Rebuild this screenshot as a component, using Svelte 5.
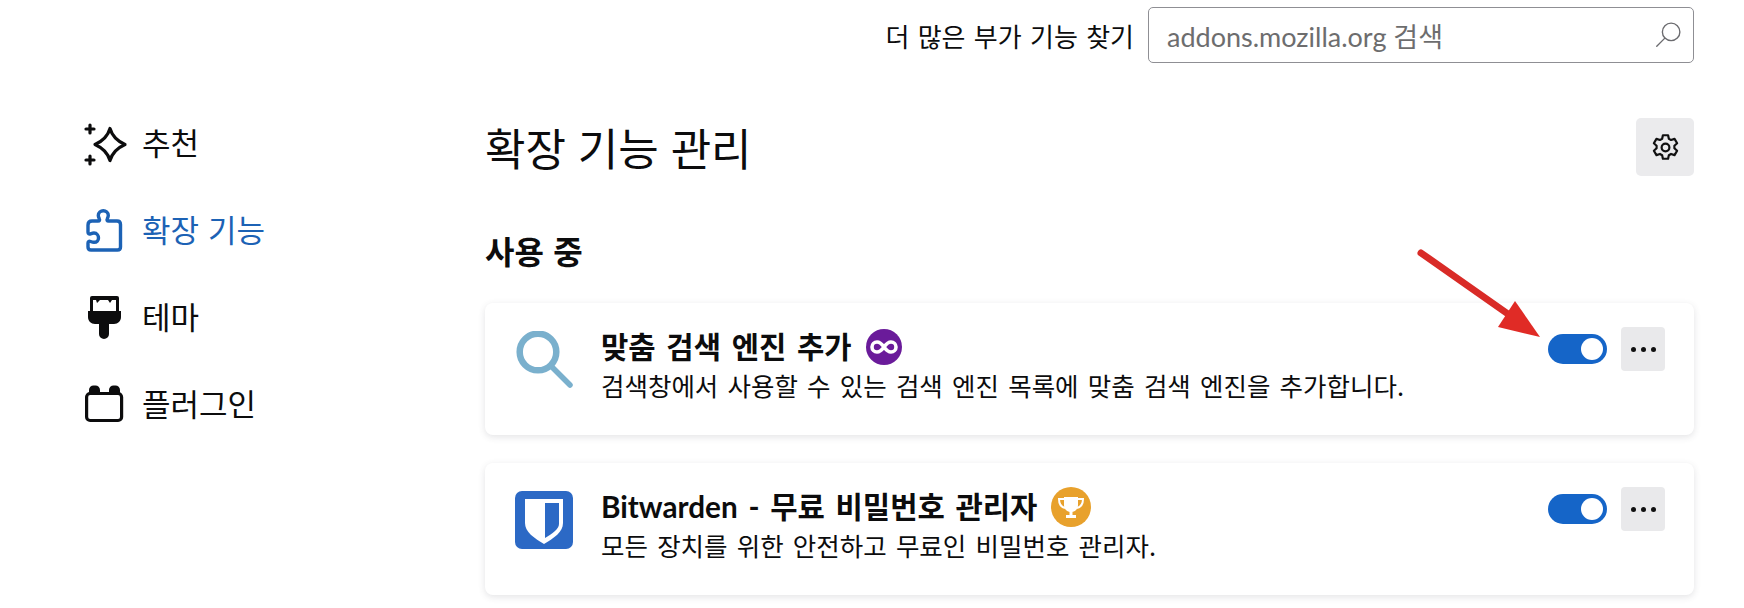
<script>
  const NAV = [
    { label: '추천', icon: 'sparkle' },
    { label: '확장 기능', icon: 'puzzle', active: true },
    { label: '테마', icon: 'brush' },
    { label: '플러그인', icon: 'plugin' }
  ];

  const ADDONS = [
    {
      name: '맞춤 검색 엔진 추가',
      desc: '검색창에서 사용할 수 있는 검색 엔진 목록에 맞춤 검색 엔진을 추가합니다.',
      icon: 'search',
      badge: 'line'
    },
    {
      name: 'Bitwarden - 무료 비밀번호 관리자',
      desc: '모든 장치를 위한 안전하고 무료인 비밀번호 관리자.',
      icon: 'bitwarden',
      badge: 'trophy'
    }
  ];
</script>

<div class="page">
  <header class="topbar">
    <span class="find-label">더 많은 부가 기능 찾기</span>
    <div class="search">
      <span class="placeholder">addons.mozilla.org 검색</span>
      <svg viewBox="0 0 24 24" width="30" height="30" fill="none" stroke="#6b6b6f" stroke-width="1.1">
        <circle cx="14.5" cy="9.5" r="7" />
        <path d="M9.5 14.5 3 21" stroke-linecap="round" />
      </svg>
    </div>
  </header>

  <div class="body">
    <nav class="sidebar">
      {#each NAV as item}
        <div class="nav-item" class:active={item.active}>
          <span class="nav-icon">
            {#if item.icon === 'sparkle'}
              <svg viewBox="0 0 44 44" width="44" height="44">
                <path d="M26 6.500c2 7 6 12 15 16-9 4-13 9-15 16-2-7-6-12-15-16 9-4 13-9 15-16Z" fill="none" stroke="currentColor" stroke-width="3.200" stroke-linejoin="round" />
                <path d="M6 3v8M2 7h8M6 34v8M2 38h8" stroke="currentColor" stroke-width="3.200" stroke-linecap="round" />
              </svg>
            {:else if item.icon === 'puzzle'}
              <svg viewBox="0 0 44 44" width="44" height="44">
                <path d="M8 12H14c1.500 0 2-1 1.300-2.300-.6-1.200-1-2-1-3.200C14.300 3.700 16.800 1.800 19.300 1.800s5 1.900 5 4.700c0 1.200-.4 2-1 3.200-.7 1.300-.2 2.300 1.300 2.300H33c2.300 0 3.500 1.200 3.500 3.500V38c0 2-1 3-3 3H7c-2 0-3-1-3-3v-4c0-1.500 1-2 2.500-1.500 1.400.5 2.500.8 3.500.8 3 0 4.500-2.100 4.500-4.300S13 24 10 24c-1 0-2.100.3-3.500.8C5 25.300 4 24.800 4 23.300V16c0-2.600 1.400-4 4-4Z" fill="none" stroke="currentColor" stroke-width="3.400" stroke-linejoin="round" />
              </svg>
            {:else if item.icon === 'brush'}
              <svg viewBox="0 0 44 44" width="44" height="44">
                <rect x="6" y="0" width="29" height="20" rx="2" fill="currentColor" />
                <path d="M9 4h3l1 3 3-3h8l2 3 2-3h4v12H9Z" fill="#fff" />
                <path d="M4 15h33v6c0 4-3 7-7 7h-5v10a5 5 0 0 1-10 0V28h-4c-4 0-7-3-7-7Z" fill="currentColor" />
              </svg>
            {:else}
              <svg viewBox="0 0 44 44" width="44" height="44">
                <rect x="2.600" y="10.500" width="35" height="27" rx="3.500" fill="none" stroke="currentColor" stroke-width="3.200" />
                <path d="M5 11V7a4.500 4.500 0 0 1 4.500-4.500h2A4.500 4.500 0 0 1 16 7v4ZM25 11V7a4.500 4.500 0 0 1 4.500-4.500h2A4.500 4.500 0 0 1 36 7v4Z" fill="currentColor" />
              </svg>
            {/if}
          </span>
          <span class="nav-label">{item.label}</span>
        </div>
      {/each}
    </nav>

    <main class="content">
      <div class="title-row">
        <h1>확장 기능 관리</h1>
        <button class="gear-btn" aria-label="도구">
          <svg viewBox="0 0 24 24" width="31" height="31" fill="none" stroke="#111" stroke-width="1.700" stroke-linejoin="round">
            <path d="M10 2.500h4l.6 2.800 1.700.9 2.700-.9 2 3.400-2.100 1.900v2l2.100 1.900-2 3.400-2.700-.9-1.700 1-.6 2.700h-4l-.6-2.700-1.700-1-2.700.9-2-3.400 2.100-1.900v-2L3 8.700l2-3.400 2.700.9 1.700-.9Z" />
            <circle cx="12" cy="12" r="3" />
          </svg>
        </button>
      </div>

      <h2>사용 중</h2>

      <div class="cards">
        {#each ADDONS as addon}
          <section class="card">
            <div class="addon-icon">
              {#if addon.icon === 'search'}
                <svg viewBox="0 0 60 60" width="60" height="60">
                  <circle cx="23" cy="21" r="18.300" fill="none" stroke="#7ab0cd" stroke-width="6.500" />
                  <path d="M36 35 55 54" stroke="#7ab0cd" stroke-width="5.500" stroke-linecap="round" />
                </svg>
              {:else}
                <svg viewBox="0 0 60 60" width="60" height="60">
                  <rect width="58" height="58" rx="7" fill="#2c69c5" />
                  <path d="M10 8h38v24c0 9-9 15-19 21-10-6-19-12-19-21Z" fill="#fff" />
                  <path d="M30 12h14v21c0 5-6 9-14 14Z" fill="#2c69c5" />
                </svg>
              {/if}
            </div>
            <div class="addon-text">
              <div class="addon-name">
                <span>{addon.name}</span>
                {#if addon.badge === 'line'}
                  <svg class="badge" viewBox="0 0 36 36" width="36" height="36">
                    <circle cx="18" cy="18" r="18" fill="#6a1b9a" />
                    <path d="M18 18c-2.500-3.500-4.500-5-7-5a5 5 0 0 0 0 10c2.500 0 4.500-1.500 7-5 2.500-3.500 4.500-5 7-5a5 5 0 0 1 0 10c-2.500 0-4.500-1.500-7-5Z" fill="none" stroke="#fff" stroke-width="3.600" />
                  </svg>
                {:else}
                  <svg class="badge" viewBox="0 0 40 40" width="40" height="40">
                    <circle cx="20" cy="20" r="20" fill="#e8a12c" />
                    <path d="M13 10h14v8c0 4-3 7-7 7s-7-3-7-7Z" fill="#fff" />
                    <path d="M13 12H8c0 5 2 8 6 9M27 12h5c0 5-2 8-6 9" fill="none" stroke="#fff" stroke-width="2" />
                    <path d="M18.500 24h3v4h3.500v3H15v-3h3.500Z" fill="#fff" />
                  </svg>
                {/if}
              </div>
              <div class="addon-desc">{addon.desc}</div>
            </div>
            <div class="controls">
              <span class="toggle"><span class="knob"></span></span>
              <button class="more" aria-label="더 보기">
                <i></i><i></i><i></i>
              </button>
            </div>
          </section>
        {/each}
      </div>
    </main>
  </div>

  <!-- annotation drawn over the screenshot -->
  <svg class="arrow" viewBox="0 0 130 100" width="130" height="100">
    <path d="M5 5 92 66" stroke="#d92b27" stroke-width="7" stroke-linecap="round" />
    <path d="M99 53 124 89 82 79Z" fill="#e02b26" />
  </svg>
</div>

<style>
  :global(body) {
    background: #fff;
    font-family: "Noto Sans CJK KR", "Noto Sans", sans-serif;
    color: #0c0c0d;
    overflow: hidden;
  }

  .page {
    position: relative;
    height: 608px;
    padding: 7px 50px 0 84px;
    box-sizing: border-box;
  }

  .topbar {
    display: flex;
    justify-content: flex-end;
    align-items: center;
    gap: 14px;
    height: 56px;
  }

  .find-label { font-size: 26px; word-spacing: 2.5px; }

  .search {
    width: 546px;
    height: 56px;
    box-sizing: border-box;
    border: 1.5px solid #8f8f94;
    border-radius: 5px;
    display: flex;
    align-items: center;
    justify-content: space-between;
    padding: 0 10px 0 18px;
  }

  .placeholder {
    font-family: Lato, "Noto Sans CJK KR", sans-serif;
    font-size: 27px;
    color: #6d6d6e;
  }

  .body {
    display: flex;
    margin-top: 55px;
  }

  .sidebar {
    width: 401px;
    flex-shrink: 0;
    display: flex;
    flex-direction: column;
    gap: 43px;
    padding-top: 4px;
  }

  .nav-item {
    display: flex;
    align-items: center;
    gap: 14px;
    height: 44px;
    font-size: 31px;
    word-spacing: 2px;
  }

  .nav-item.active { color: #1c62b5; }
  .nav-icon { display: flex; }
  .nav-label { padding-bottom: 5px; }

  .content { flex: 1; }

  .title-row {
    display: flex;
    justify-content: space-between;
    align-items: center;
    height: 58px;
  }

  h1 {
    font-size: 44px;
    font-weight: 400;
    margin: 0;
    line-height: 58px;
    word-spacing: 2px;
  }

  .gear-btn {
    width: 58px;
    height: 58px;
    border: none;
    border-radius: 5px;
    background: #ebebed;
    display: flex;
    align-items: center;
    justify-content: center;
    padding: 0;
  }

  h2 {
    font-size: 32px;
    font-weight: 700;
    margin: 50px 0 0;
    line-height: 48px;
    word-spacing: 2px;
  }

  .cards {
    display: flex;
    flex-direction: column;
    gap: 28px;
    margin-top: 29px;
  }

  .card {
    height: 132px;
    box-sizing: border-box;
    background: #fff;
    border-radius: 8px;
    box-shadow: 0 2px 7px rgba(58, 57, 68, 0.14);
    display: flex;
    padding: 24px 29px 0 30px;
  }

  .addon-icon { width: 86px; flex-shrink: 0; padding-top: 4px; }

  .addon-text { flex: 1; }

  .addon-name {
    display: flex;
    align-items: center;
    gap: 14px;
    font-family: Lato, "Noto Sans CJK KR", sans-serif;
    font-size: 29.7px;
    font-weight: 700;
    line-height: 40px;
    word-spacing: 3.5px;
  }

  .badge { flex-shrink: 0; }

  .addon-desc {
    font-size: 25.5px;
    line-height: 36px;
    word-spacing: 3.5px;
  }

  .controls {
    display: flex;
    align-items: center;
    gap: 14px;
    height: 44px;
  }

  .toggle {
    width: 59px;
    height: 30px;
    border-radius: 15px;
    background: #1565c8;
    display: flex;
    align-items: center;
    justify-content: flex-end;
    padding-right: 4px;
    box-sizing: border-box;
  }

  .knob {
    width: 22px;
    height: 22px;
    border-radius: 50%;
    background: #fff;
  }

  .more {
    width: 44px;
    height: 44px;
    border: none;
    border-radius: 4px;
    background: #e9e9eb;
    display: flex;
    align-items: center;
    justify-content: center;
    gap: 5px;
    padding: 0;
  }

  .more i {
    width: 5px;
    height: 5px;
    border-radius: 50%;
    background: #111;
  }

  .arrow {
    position: absolute;
    left: 1416px;
    top: 248px;
  }
</style>
